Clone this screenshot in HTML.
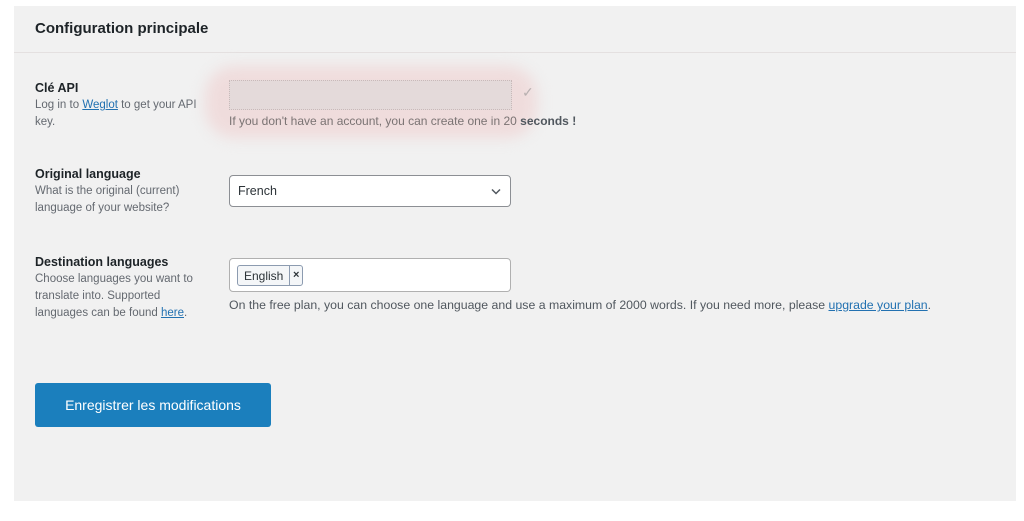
<!DOCTYPE html>
<html><head><meta charset="utf-8"><style>
body{margin:0;width:1024px;height:521px;background:#fff;font-family:"Liberation Sans",sans-serif;position:relative;overflow:hidden}
.p{position:absolute;left:14px;top:6px;width:1002px;height:495px;background:#f1f1f1}
.a{position:absolute}
h2{position:absolute;left:35px;top:20px;margin:0;font-size:15px;font-weight:bold;color:#1d2327}
.hr{position:absolute;left:14px;top:52px;width:1002px;height:1px;background:#e4e0e0}
.lb{font-size:12.5px;font-weight:bold;color:#1d2327}
.d{font-size:11.5px;color:#646970;line-height:17px}
a{color:#2271b1;text-decoration:underline}
.in{background:#fff;border:1px solid #8c8f94;border-radius:4px;box-sizing:border-box}
</style></head><body>
<div class="p"></div>
<h2>Configuration principale</h2>
<div class="hr"></div>

<div class="a lb" style="left:35px;top:81px">Clé API</div>
<div class="a d" style="left:35px;top:97px;width:172px">Log in to <a>Weglot</a> to get your API key.</div>
<div class="a" style="left:205px;top:66px;width:332px;height:72px;border-radius:30px;background:#efdcdc;filter:blur(7px)"></div>
<div class="a" style="left:229px;top:80px;width:283px;height:30px;background:#e4dada;border:1px dotted #c9b9b9;box-sizing:border-box"></div>
<div class="a" style="left:522px;top:84px;color:#b8b0b0;font-size:14px">✓</div>
<div class="a d" style="left:229px;top:113px;font-size:12px;color:#7a7373">If you don't have an account, you can create one in 20 <b style="color:#50575e">seconds !</b></div>

<div class="a lb" style="left:35px;top:167px">Original language</div>
<div class="a d" style="left:35px;top:183px;width:170px">What is the original (current) language of your website?</div>
<div class="a in" style="left:229px;top:175px;width:282px;height:32px;font-size:12.5px;color:#2c3338;padding:8px 8px">French
<svg style="position:absolute;right:9px;top:12px" width="10" height="7" viewBox="0 0 10 7"><path d="M1 1.5L5 5.5L9 1.5" stroke="#50575e" stroke-width="1.5" fill="none"/></svg></div>

<div class="a lb" style="left:35px;top:255px">Destination languages</div>
<div class="a d" style="left:35px;top:271px;width:166px">Choose languages you want to translate into. Supported languages can be found <a>here</a>.</div>
<div class="a in" style="left:229px;top:258px;width:282px;height:34px;border-color:#b0b0b0"></div>
<div class="a" style="left:237px;top:265px;width:66px;height:21px;border:1px solid #8c9bb0;border-radius:3px;background:#f4f6f8;box-sizing:border-box;font-size:12px;color:#2c3338">
<span style="position:absolute;left:6px;top:3px">English</span>
<span style="position:absolute;left:51px;top:0;width:1px;height:19px;background:#8c9bb0"></span>
<span style="position:absolute;left:55px;top:3px;font-size:11px;font-weight:bold">×</span></div>
<div class="a" style="left:229px;top:298px;font-size:12.3px;color:#50575e">On the free plan, you can choose one language and use a maximum of 2000 words. If you need more, please <a>upgrade your plan</a>.</div>

<div class="a" style="left:35px;top:383px;width:236px;height:44px;background:#1b7fbd;border-radius:3px;color:#fff;font-size:14px;text-align:center;line-height:44px">Enregistrer les modifications</div>
</body></html>
